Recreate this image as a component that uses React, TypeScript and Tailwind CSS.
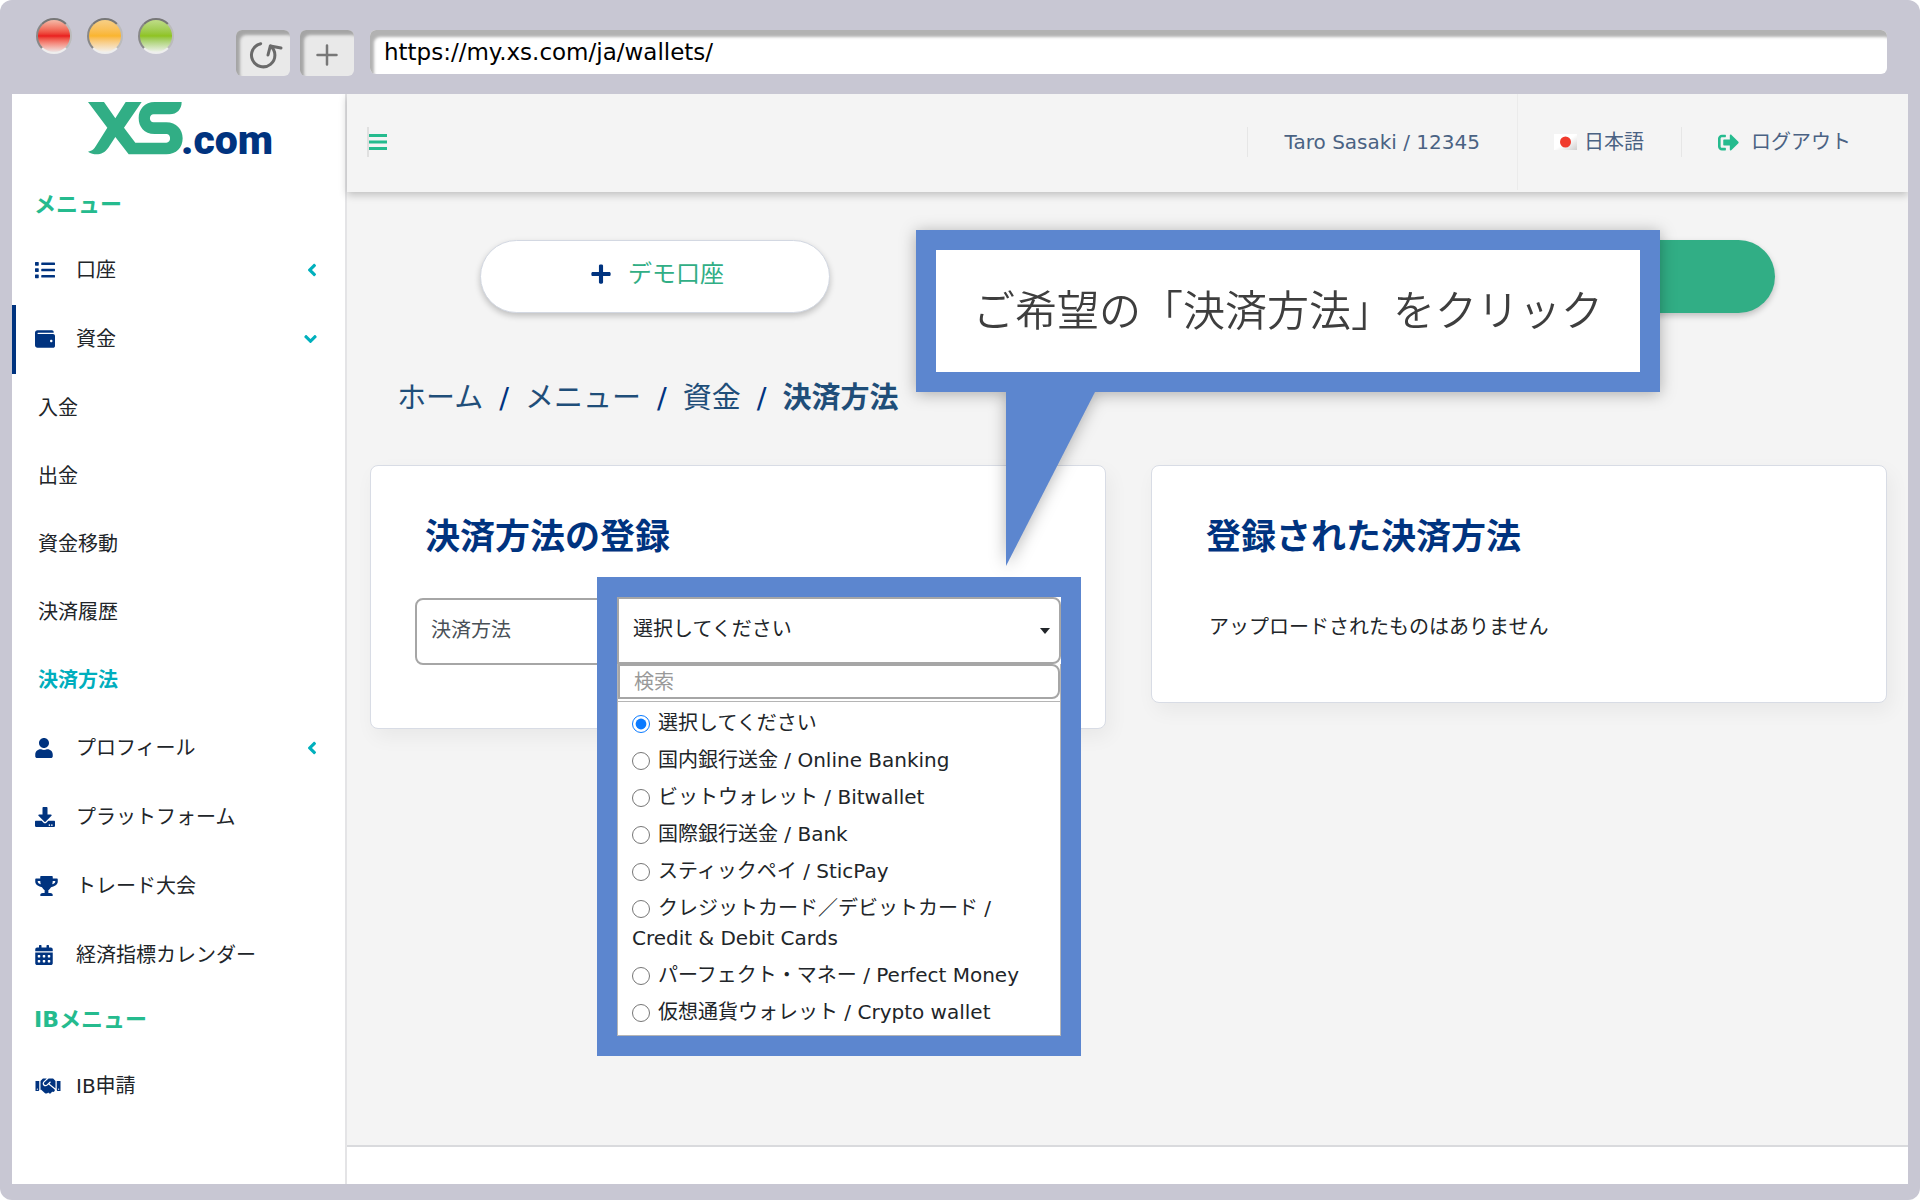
import React, { useState } from "react";
import {
  FaAngleDown,
  FaAngleLeft,
  FaCalendarAlt,
  FaDownload,
  FaHandshake,
  FaList,
  FaPlus,
  FaSignOutAlt,
  FaTrophy,
  FaUser,
  FaWallet,
} from "react-icons/fa";

interface MenuItem {
  label: string;
  icon?: React.ReactNode;
  arrow?: "left" | "down";
  active?: boolean;
  selected?: boolean;
}

const menu: MenuItem[] = [
  { label: "口座", icon: <FaList className="size-5" />, arrow: "left" },
  { label: "資金", icon: <FaWallet className="size-5" />, arrow: "down", active: true },
  { label: "入金" },
  { label: "出金" },
  { label: "資金移動" },
  { label: "決済履歴" },
  { label: "決済方法", selected: true },
  { label: "プロフィール", icon: <FaUser className="h-5 w-[18px]" />, arrow: "left" },
  { label: "プラットフォーム", icon: <FaDownload className="size-5" /> },
  { label: "トレード大会", icon: <FaTrophy className="h-5 w-[23px]" /> },
  { label: "経済指標カレンダー", icon: <FaCalendarAlt className="h-5 w-[18px]" /> },
];

const ibMenu: MenuItem[] = [{ label: "IB申請", icon: <FaHandshake className="h-5 w-[26px]" /> }];

const methods = [
  "選択してください",
  "国内銀行送金 / Online Banking",
  "ビットウォレット / Bitwallet",
  "国際銀行送金 / Bank",
  "スティックペイ / SticPay",
  "クレジットカード／デビットカード / Credit & Debit Cards",
  "パーフェクト・マネー / Perfect Money",
  "仮想通貨ウォレット / Crypto wallet",
];

const Logo: React.FC = () => (
  <svg viewBox="0 0 210 64" className="ml-[76px] h-16 w-[210px]" role="img" aria-label="XS.com">
    <path
      transform="translate(0 3) scale(0.3333) translate(-205 -308)"
      fill="#31ae85"
      d="M205 308H253L287 357L318 308H366L313 385L347 430H440C455 430 455 404 440 404H405C373 404 357 382 357 356C357 330 375 308 405 308H486C486 330 472 345 450 345H402C387 345 387 369 402 369H440C470 369 489 390 489 417C489 445 470 465 440 465H327L287 413L266 445C250 468 226 470 205 457C218 456 225 447 230 438L263 385Z"
    />
    <text x="93" y="55" fill="#00337f" fontSize="41" fontWeight="900" fontFamily="Roboto, sans-serif">
      .com
    </text>
  </svg>
);

const MenuRow: React.FC<{ item: MenuItem }> = ({ item }) => {
  if (!item.icon) {
    return (
      <a
        href="#"
        className={`flex h-[68px] items-center pl-[26px] ${
          item.selected ? "font-bold text-[#00aebd]" : "text-[#212529]"
        }`}
      >
        {item.label}
      </a>
    );
  }
  return (
    <a
      href="#"
      className={`flex h-[69px] items-center border-l-4 pr-7 pb-[2px] pl-[19px] text-[#212529] ${
        item.active ? "border-[#00337f]" : "border-transparent"
      }`}
    >
      <span className="w-[41px] shrink-0 text-[#00337f]">{item.icon}</span>
      <span className="flex-1">{item.label}</span>
      {item.arrow === "left" && <FaAngleLeft className="h-5 w-[10px] text-[#00b0bd]" />}
      {item.arrow === "down" && <FaAngleDown className="h-5 w-[13px] text-[#00b0bd]" />}
    </a>
  );
};

const Sidebar: React.FC = () => (
  <aside className="w-[335px] shrink-0 border-r-2 border-[#e4e4e6] bg-white pt-[5px] text-xl">
    <Logo />
    <nav className="pt-[11px]">
      <h2 className="flex h-[62px] items-center pl-[22px] text-[22px] font-bold text-[#25bb8e]">メニュー</h2>
      {menu.map((item) => (
        <MenuRow key={item.label} item={item} />
      ))}
      <h2 className="flex h-[62px] items-center pb-[2px] pl-[22px] text-[22px] font-bold text-[#25bb8e]">
        IBメニュー
      </h2>
      {ibMenu.map((item) => (
        <MenuRow key={item.label} item={item} />
      ))}
    </nav>
  </aside>
);

const BrowserBar: React.FC = () => (
  <div className="flex h-[94px] items-start pr-[33px] pl-9">
    <div className="flex gap-[15px] pt-[18px]">
      <span className="size-9 rounded-full border-2 border-t-[#777] border-r-[#bbb] border-b-[#eee] border-l-[#888] bg-linear-to-b from-[#f3b9a8] via-[#e91b1e] to-[#ece4e4]" />
      <span className="size-9 rounded-full border-2 border-t-[#777] border-r-[#bbb] border-b-[#eee] border-l-[#888] bg-linear-to-b from-[#f7cf84] via-[#fab52d] to-[#f3f0ea]" />
      <span className="size-9 rounded-full border-2 border-t-[#777] border-r-[#bbb] border-b-[#eee] border-l-[#888] bg-linear-to-b from-[#bfdc86] via-[#8fc31f] to-[#eef1ea]" />
    </div>
    <div className="flex gap-[10px] pt-[30px] pl-[62px]">
      <button
        type="button"
        aria-label="再読み込み"
        className="h-[46px] w-[54px] rounded-md bg-[#e9e9e9] shadow-[inset_4px_5px_3px_#a5a5a5]"
      >
        <svg
          viewBox="0 0 54 46"
          className="h-[46px] w-[54px]"
          fill="none"
          stroke="#6a6a6a"
          strokeWidth="3"
          strokeLinecap="round"
          strokeLinejoin="round"
        >
          <path d="M24.700 13.700A11.700 11.700 0 1 0 34.500 16" />
          <path d="M32 25L34.300 16L45 18" />
        </svg>
      </button>
      <button
        type="button"
        aria-label="新しいタブ"
        className="flex h-[46px] w-[54px] items-center justify-center rounded-md bg-[#e9e9e9] shadow-[inset_4px_5px_3px_#a5a5a5]"
      >
        <svg viewBox="0 0 22 22" className="mt-1 size-[22px]" stroke="#777" strokeWidth="2.500" strokeLinecap="round">
          <path d="M11 1.500V20.500M1.500 11H20.500" />
        </svg>
      </button>
    </div>
    <div className="flex-1 pt-[30px] pl-4">
      <input
        aria-label="URL"
        defaultValue="https://my.xs.com/ja/wallets/"
        className="h-11 w-full rounded-md bg-white pl-[14px] text-[23px] text-black shadow-[inset_4px_7px_3px_#b2b2b2] outline-none"
      />
    </div>
  </div>
);

const Header: React.FC = () => (
  <header className="relative z-10 flex h-[98px] items-center bg-[#f4f4f4] pr-[57px] pb-[2px] pl-5 text-xl text-[#4a6283] shadow-[0_3px_8px_rgba(0,0,0,0.22)]">
    <button type="button" aria-label="メニューを開閉" className="flex h-[30px] items-center border-l-2 border-[#e0e0e0]">
      <svg viewBox="0 0 18 17" className="h-[17px] w-[18px]" fill="#25bb8e">
        <path d="M0 0H18V3H0ZM0 6.500H18V9.500H0ZM0 13H18V16H0Z" />
      </svg>
    </button>
    <div className="ml-auto flex h-full items-center">
      <div className="flex h-[30px] items-center border-l border-[#e6e6e6] px-[37px]">Taro Sasaki / 12345</div>
      <div className="flex h-full items-center border-l border-[#ebebeb] pl-9">
        <a href="#" className="flex items-center gap-[7px] pr-[37px]">
          <svg viewBox="0 0 23 16" className="h-4 w-[23px]">
            <defs>
              <linearGradient id="flag" x1="0" y1="0" x2="1" y2="1">
                <stop offset="0.5" stopColor="#fff" />
                <stop offset="1" stopColor="#cfcfcf" />
              </linearGradient>
            </defs>
            <rect width="23" height="16" fill="url(#flag)" />
            <circle cx="11.500" cy="8" r="5.500" fill="#f03a2c" />
          </svg>
          日本語
        </a>
      </div>
      <a href="#" className="flex h-[30px] items-center gap-3 border-l border-[#e6e6e6] pl-9">
        <FaSignOutAlt className="size-[21px] text-[#25bb8e]" />
        ログアウト
      </a>
    </div>
  </header>
);

const MethodDropdown: React.FC = () => {
  const [selected, setSelected] = useState(methods[0]);
  const [search, setSearch] = useState("");

  return (
    <div className="absolute -top-[21px] -right-5 left-[182px] border-20 border-[#5c86cf] bg-white text-xl text-[#212529]">
      <div className="relative">
        <select
          id="method"
          value={selected}
          onChange={(e) => setSelected(e.target.value)}
          className="block h-[67px] w-full appearance-none rounded-r-lg border-2 border-[#a6a6a6] bg-white pb-1 pl-[14px] outline-none"
        >
          {methods.map((m) => (
            <option key={m}>{m}</option>
          ))}
        </select>
        <svg
          viewBox="0 0 10 6"
          className="pointer-events-none absolute top-[31px] right-[11px] h-[6px] w-[10px]"
          fill="#212529"
        >
          <path d="M0 0H10L5 6Z" />
        </svg>
      </div>
      <div className="border border-t-0 border-[#b5b5b5] pb-2">
        <input
          type="text"
          aria-label="検索"
          placeholder="検索"
          value={search}
          onChange={(e) => setSearch(e.target.value)}
          className="block h-[35px] w-full rounded-r-lg border-2 border-[#a6a6a6] bg-white pl-[14px] outline-none placeholder:text-[#999]"
        />
        <div className="mt-[2px] flex flex-col gap-[7px] border-t border-[#b5b5b5] pt-[6px] pr-2 pl-[14px]">
          {methods
            .filter((m) => m.includes(search))
            .map((m) => (
              <label key={m} className="block leading-[30px]">
                <input
                  type="radio"
                  name="method"
                  checked={selected === m}
                  onChange={() => setSelected(m)}
                  className="mr-2 size-[18px] align-[-3px] accent-[#0a7aff]"
                />
                {m}
              </label>
            ))}
        </div>
      </div>
    </div>
  );
};

const Callout: React.FC = () => (
  <div className="absolute top-[38px] left-[569px] z-20 drop-shadow-[0_2px_8px_rgba(0,0,0,0.3)]">
    <div className="flex h-[162px] w-[744px] items-center justify-center border-20 border-[#5c86cf] bg-white text-[42px] font-[350] whitespace-nowrap text-[#3e3e3e]">
      ご希望の「決済方法」をクリック
    </div>
    <svg viewBox="0 0 89 174" className="ml-[90px] h-[174px] w-[89px]" fill="#5c86cf">
      <path d="M0 0H89L0 174Z" />
    </svg>
  </div>
);

const cardClass = "rounded-lg border border-[#d8dce5] bg-white shadow-[4px_8px_20px_rgba(0,0,0,0.05)]";

const App: React.FC = () => {
  return (
    <div className="min-h-screen bg-white font-['DejaVu_Sans','Noto_Sans_CJK_JP',sans-serif]">
      <div className="flex min-h-screen flex-col rounded-xl bg-[#c8c7d3] pb-4">
        <BrowserBar />
        <div className="mx-3 flex flex-1 overflow-hidden bg-[#f4f4f4]">
          <Sidebar />
          <div className="flex min-w-0 flex-1 flex-col">
            <Header />
            <main className="relative flex-1">
              <div className="flex justify-between px-[133px] pt-12">
                <button
                  type="button"
                  className="flex h-[73px] w-[350px] items-center justify-center gap-4 rounded-full border border-[#d3d8e2] bg-white pb-[6px] pl-1 text-2xl text-[#31ae85] shadow-[0_3px_6px_rgba(0,0,0,0.22)]"
                >
                  <FaPlus className="size-[22px] text-[#00337f]" />
                  デモ口座
                </button>
                <button
                  type="button"
                  aria-label="リアル口座"
                  className="h-[73px] w-[350px] rounded-full bg-[#31ae85] shadow-[0_3px_6px_rgba(0,0,0,0.22)]"
                />
              </div>

              <nav className="flex items-center gap-4 pt-[63px] pl-[50px] text-[29px] leading-[44px] text-[#1f4e79]">
                <a href="#">ホーム</a>
                <span className="text-[#00337f]">/</span>
                <a href="#">メニュー</a>
                <span className="text-[#00337f]">/</span>
                <a href="#">資金</a>
                <span className="text-[#00337f]">/</span>
                <span className="font-bold">決済方法</span>
              </nav>

              <div className="grid grid-cols-2 items-start gap-[45px] pt-[45px] pr-[21px] pl-[23px]">
                <section className={`${cardClass} h-[264px] pt-[47px] pr-11 pl-11`}>
                  <h1 className="pl-[10px] text-[35px] leading-[48px] font-bold text-[#00337f]">決済方法の登録</h1>
                  <div className="relative mt-[37px]">
                    <label
                      htmlFor="method"
                      className="flex h-[67px] w-[200px] items-center rounded-l-lg border-2 border-[#a6a6a6] pb-1 pl-[14px] text-xl text-[#495057]"
                    >
                      決済方法
                    </label>
                    <MethodDropdown />
                  </div>
                </section>
                <section className={`${cardClass} h-[238px] pt-[47px] pl-[54px]`}>
                  <h1 className="text-[35px] leading-[48px] font-bold text-[#00337f]">登録された決済方法</h1>
                  <p className="pt-[52px] pl-[3px] text-xl text-[#212529]">アップロードされたものはありません</p>
                </section>
              </div>
              <Callout />
            </main>
            <footer className="h-[39px] border-t-2 border-[#d9dadd] bg-white" />
          </div>
        </div>
      </div>
    </div>
  );
};

export default App;
